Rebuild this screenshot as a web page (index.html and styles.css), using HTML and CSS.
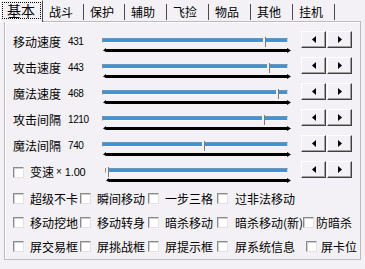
FILE: index.html
```html
<!DOCTYPE html>
<html lang="zh-CN">

<head>
	<meta charset="UTF-8">
	<title>基本设置</title>
	<link rel="stylesheet" href="styles.css">
</head>

<body>
	<div class="dlg">
		<div class="tabs">
			<div class="tab active"><span class="focus">基本</span></div>
			<div class="tab narrow">战斗</div>
			<div class="tab narrow">保护</div>
			<div class="tab">辅助</div>
			<div class="tab">飞捡</div>
			<div class="tab">物品</div>
			<div class="tab">其他</div>
			<div class="tab">挂机</div>
		</div>

		<div class="page">
			<div class="row">
				<div class="label">移动速度<span class="num">431</span></div>
				<div class="slider">
					<div class="track"><div class="thumb" style="left: 87%"></div></div>
					<svg class="ticks" width="190" height="6" viewBox="0 0 190 6"><path d="M1 3.5 L4 1 L4 2 L185 2 L185 1 L189 3.5 L185 6 L185 5 L4 5 Z" /></svg>
				</div>
				<div class="spin">
					<div class="btn"><svg width="4" height="7"><polygon points="0,3.5 4,0 4,7" /></svg></div>
					<div class="btn"><svg width="4" height="7"><polygon points="4,3.5 0,0 0,7" /></svg></div>
				</div>
			</div>

			<div class="row">
				<div class="label">攻击速度<span class="num">443</span></div>
				<div class="slider">
					<div class="track"><div class="thumb" style="left: 89%"></div></div>
					<svg class="ticks" width="190" height="6" viewBox="0 0 190 6"><path d="M1 3.5 L4 1 L4 2 L185 2 L185 1 L189 3.5 L185 6 L185 5 L4 5 Z" /></svg>
				</div>
				<div class="spin">
					<div class="btn"><svg width="4" height="7"><polygon points="0,3.5 4,0 4,7" /></svg></div>
					<div class="btn"><svg width="4" height="7"><polygon points="4,3.5 0,0 0,7" /></svg></div>
				</div>
			</div>

			<div class="row">
				<div class="label">魔法速度<span class="num">468</span></div>
				<div class="slider">
					<div class="track"><div class="thumb" style="left: 94%"></div></div>
					<svg class="ticks" width="190" height="6" viewBox="0 0 190 6"><path d="M1 3.5 L4 1 L4 2 L185 2 L185 1 L189 3.5 L185 6 L185 5 L4 5 Z" /></svg>
				</div>
				<div class="spin">
					<div class="btn"><svg width="4" height="7"><polygon points="0,3.5 4,0 4,7" /></svg></div>
					<div class="btn"><svg width="4" height="7"><polygon points="4,3.5 0,0 0,7" /></svg></div>
				</div>
			</div>

			<div class="row">
				<div class="label">攻击间隔<span class="num">1210</span></div>
				<div class="slider">
					<div class="track"><div class="thumb" style="left: 86.5%"></div></div>
					<svg class="ticks" width="190" height="6" viewBox="0 0 190 6"><path d="M1 3.5 L4 1 L4 2 L185 2 L185 1 L189 3.5 L185 6 L185 5 L4 5 Z" /></svg>
				</div>
				<div class="spin">
					<div class="btn"><svg width="4" height="7"><polygon points="0,3.5 4,0 4,7" /></svg></div>
					<div class="btn"><svg width="4" height="7"><polygon points="4,3.5 0,0 0,7" /></svg></div>
				</div>
			</div>

			<div class="row">
				<div class="label">魔法间隔<span class="num">740</span></div>
				<div class="slider">
					<div class="track"><div class="thumb" style="left: 54%"></div></div>
					<svg class="ticks" width="190" height="6" viewBox="0 0 190 6"><path d="M1 3.5 L4 1 L4 2 L185 2 L185 1 L189 3.5 L185 6 L185 5 L4 5 Z" /></svg>
				</div>
				<div class="spin">
					<div class="btn"><svg width="4" height="7"><polygon points="0,3.5 4,0 4,7" /></svg></div>
					<div class="btn"><svg width="4" height="7"><polygon points="4,3.5 0,0 0,7" /></svg></div>
				</div>
			</div>

			<div class="row speed">
				<div class="label"><span class="cb"></span>变速<span class="times">×</span><span class="num">1.00</span></div>
				<div class="slider">
					<div class="track"><div class="thumb" style="left: 0%"></div></div>
					<svg class="ticks" width="187" height="6" viewBox="0 0 187 6"><path d="M1 3.5 L4 1 L4 2 L182 2 L182 1 L186 3.5 L182 6 L182 5 L4 5 Z" /></svg>
				</div>
				<div class="spin">
					<div class="btn"><svg width="4" height="7"><polygon points="0,3.5 4,0 4,7" /></svg></div>
					<div class="btn"><svg width="4" height="7"><polygon points="4,3.5 0,0 0,7" /></svg></div>
				</div>
			</div>

			<div class="checks">
				<div class="chk"><span class="cb"></span>超级不卡</div>
				<div class="chk"><span class="cb"></span>瞬间移动</div>
				<div class="chk"><span class="cb"></span>一步三格</div>
				<div class="chk wide"><span class="cb"></span>过非法移动</div>
				<div class="chk"></div>

				<div class="chk"><span class="cb"></span>移动挖地</div>
				<div class="chk"><span class="cb"></span>移动转身</div>
				<div class="chk"><span class="cb"></span>暗杀移动</div>
				<div class="chk wide"><span class="cb"></span>暗杀移动(新)</div>
				<div class="chk last"><span class="cb"></span>防暗杀</div>

				<div class="chk"><span class="cb"></span>屏交易框</div>
				<div class="chk"><span class="cb"></span>屏挑战框</div>
				<div class="chk"><span class="cb"></span>屏提示框</div>
				<div class="chk wide"><span class="cb"></span>屏系统信息</div>
				<div class="chk last far"><span class="cb"></span>屏卡位</div>
			</div>
		</div>
	</div>
</body>

</html>
```

FILE: styles.css
```css
body {
	margin: 0;
	background: #f3f1f5;
	font-family: "Noto Sans CJK SC", "Noto Sans", sans-serif;
	font-size: 12px;
	color: #000;
}

.dlg {
	width: 365px;
	height: 269px;
	overflow: hidden;
}

/* tab strip */
.tabs {
	display: flex;
	height: 21px;
	align-items: flex-start;
}

.tab {
	box-sizing: border-box;
	width: 42px;
	height: 16px;
	margin-top: 4px;
	padding: 1px 0 0 6px;
	line-height: 14px;
	border-right: 1px solid #4a4a4a;
	white-space: nowrap;
}

.tab.narrow {
	width: 41px;
}

.tab.active {
	position: relative;
	width: 43px;
	height: 22px;
	margin-top: 0;
	padding: 0;
	background: #f3f1f5;
	border-left: 1px solid #fff;
	border-top: 1px solid #fff;
}

.focus {
	display: block;
	height: 15px;
	margin: 1px 1px 0 1px;
	padding-left: 4px;
	border: 1px dotted #000;
	font-size: 14px;
	line-height: 15px;
}

/* page */
.page {
	box-sizing: border-box;
	width: 357px;
	height: 239px;
	margin-left: 4px;
	padding: 8px 0 0 8px;
	border: 1px solid #bcbabe;
	box-shadow: inset 1px 1px #fff;
	overflow: hidden;
}

.row {
	display: flex;
	height: 26px;
	align-items: flex-start;
}

.label {
	display: flex;
	align-items: center;
	width: 89px;
	height: 14px;
	margin-top: 5px;
	line-height: 14px;
	white-space: nowrap;
}

.num {
	margin-left: 7px;
	font-family: "Liberation Sans", Arial, sans-serif;
	font-size: 10px;
	letter-spacing: -0.4px;
}

.times {
	margin-left: 2px;
	font-family: "Liberation Sans", Arial, sans-serif;
	font-size: 10px;
}

.times + .num {
	margin-left: 3px;
	font-size: 11px;
	letter-spacing: -0.2px;
}

.slider {
	width: 190px;
	padding-top: 8px;
}

.track {
	position: relative;
	box-sizing: border-box;
	width: 186px;
	height: 5px;
	background: #3a95db;
	border-top: 1px solid #8c8c8c;
	border-left: 1px solid #8c8c8c;
	border-bottom: 1px solid #f8f8f8;
	border-right: 1px solid #d8d8d8;
}

.thumb {
	position: absolute;
	top: -2px;
	width: 2px;
	height: 10px;
	background: #f2f2f2;
	border-right: 1px solid #7a7a7a;
}

.ticks {
	display: block;
	margin-top: 4px;
	fill: #000;
}

.speed .label {
	width: 92px;
}

.speed .slider {
	width: 187px;
}

.speed .track {
	width: 183px;
}

.spin {
	display: flex;
	gap: 1px;
	margin: 1px 0 0 9px;
}

.btn {
	box-sizing: border-box;
	display: flex;
	align-items: center;
	justify-content: center;
	width: 25px;
	height: 17px;
	background: #f3f1f5;
	border: 1px solid;
	border-color: #fff #404040 #404040 #fff;
	box-shadow: inset -1px -1px #a0a0a0;
}

.btn svg {
	display: block;
	fill: #000;
}

/* checkboxes */
.cb {
	box-sizing: border-box;
	flex: none;
	width: 11px;
	height: 11px;
	margin-right: 6px;
	background: #fff;
	border-top: 1px solid #8a8a8a;
	border-left: 1px solid #8a8a8a;
	border-bottom: 1px solid #e2e2e2;
	border-right: 1px solid #e2e2e2;
	box-shadow: inset 1px 1px #cfcfcf;
}

.checks {
	display: grid;
	grid-template-columns: 67px 68px 69px 86px auto;
	grid-auto-rows: 24px;
}

.chk {
	display: flex;
	align-items: center;
	white-space: nowrap;
}

.chk.wide .cb {
	margin-right: 7px;
}

.chk.last .cb {
	margin-right: 2px;
}

.chk.far {
	margin-left: 3px;
}

.chk.far .cb {
	margin-right: 4px;
}
```
